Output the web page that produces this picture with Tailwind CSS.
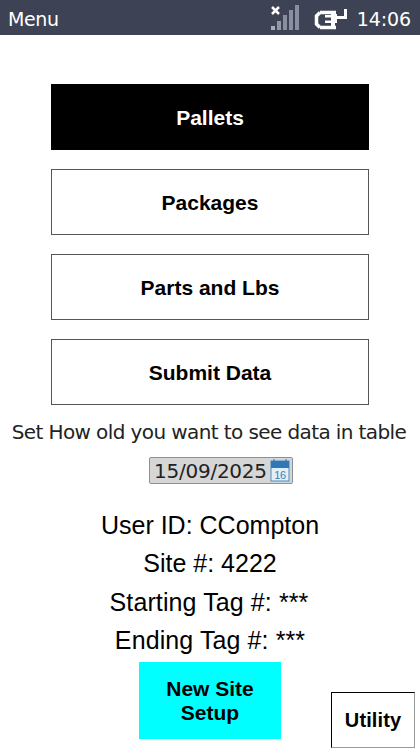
<!DOCTYPE html>
<html lang="en">
<head>
    <meta charset="UTF-8">
    <meta name="viewport" content="width=device-width, initial-scale=1.0">
    <title>Menu</title>
    <script src="https://cdn.jsdelivr.net/npm/@tailwindcss/browser@4"></script>
</head>
<body class="w-[420px] h-[749px] overflow-hidden bg-white font-['Liberation_Sans',sans-serif] text-black">

    <!-- Status bar -->
    <header class="h-[35px] bg-[#3d4354] flex items-center pl-[8px] pr-[9px] text-white text-[19px] font-['DejaVu_Sans',sans-serif]">
        <span class="pt-[3px] tracking-[-0.4px]">Menu</span>
        <svg class="ml-auto" width="29" height="26" viewBox="0 0 29 26">
            <path d="M1 2l7 7M8 2l-7 7" stroke="#fff" stroke-width="2.500" fill="none"/>
            <rect x="0" y="21" width="4" height="4" fill="#a8acb8"/>
            <rect x="6" y="16" width="4" height="9" fill="#9297a6"/>
            <rect x="12" y="10" width="4" height="15" fill="#8a8fa0"/>
            <rect x="18" y="5" width="4" height="20" fill="#8a8fa0"/>
            <rect x="24" y="0" width="4" height="25" fill="#8a8fa0"/>
        </svg>
        <svg class="ml-[14px] mt-[2px]" width="33" height="22" viewBox="0 0 33 22">
            <path d="M6 4.500h16M6 19.500h16M6 4.500L2.500 8v8L6 19.500" fill="none" stroke="#fff" stroke-width="3.500"/>
            <path d="M17 6h6v2h7V1h3v10h-10v4h-2v3h-4v-3h-6v-2.500h6v-3h-6V7h6z" fill="#fff"/>
        </svg>
        <span class="ml-[10px] pt-[3px] tracking-[-0.1px]">14:06</span>
    </header>

    <main class="flex flex-col items-center">
        <!-- Main menu buttons -->
        <div class="mt-[49px] flex flex-col gap-[19px]">
            <button class="w-[318px] h-[66px] pt-[1px] bg-black text-white font-bold text-[21px]">Pallets</button>
            <button class="w-[318px] h-[66px] pt-[1px] bg-white border border-[#555] font-bold text-[21px]">Packages</button>
            <button class="w-[318px] h-[66px] pt-[1px] bg-white border border-[#555] font-bold text-[21px]">Parts and Lbs</button>
            <button class="w-[318px] h-[66px] pt-[1px] bg-white border border-[#555] font-bold text-[21px]">Submit Data</button>
        </div>

        <p class="mt-[14px] text-[20px] leading-[26px] font-['DejaVu_Sans',sans-serif] tracking-[-0.6px] whitespace-nowrap -ml-[2px] text-[#222]">Set How old you want to see data in table</p>

        <!-- Date input -->
        <div class="mt-[12px] ml-[22px] w-[144px] h-[27px] bg-[#d6d6d6] border border-[#8a909c] rounded-[2px] flex items-center justify-between pl-[4px] pr-[2px] text-[20px] text-[#222] font-['DejaVu_Sans',sans-serif] tracking-[-0.25px]">
            <span>15/09/2025</span>
            <svg width="20" height="23" viewBox="0 0 20 23">
                <rect x="1" y="2" width="18" height="20" fill="#e4eef7" stroke="#4a8cc0"/>
                <rect x="1" y="2" width="18" height="7" fill="#2f78b5"/>
                <path d="M4 0v3M16 0v3" stroke="#2f78b5"/>
                <text x="10" y="20" text-anchor="middle" font-size="11" font-family="Liberation Sans" fill="#3b7fb8">16</text>
            </svg>
        </div>

        <!-- Session info -->
        <div class="mt-[22px] text-center text-[25px] leading-[38px]">
            <p>User ID: CCompton</p>
            <p>Site #: 4222</p>
            <p class="translate-y-[1px] -translate-x-[1px] tracking-[0.1px]">Starting Tag #: ***</p>
            <p class="translate-y-[1px] tracking-[0.1px]">Ending Tag #: ***</p>
        </div>

        <!-- Bottom row -->
        <div class="w-full h-[87px] mt-[4px] grid grid-cols-[139px_142px_50px_84px] items-start">
            <button class="col-start-2 h-[77px] bg-[#00ffff] font-bold text-[21px] leading-[24px]">New Site<br>Setup</button>
            <button class="col-start-4 mt-[30px] h-[56px] bg-white border border-t-black border-l-black border-r-[#999] border-b-[#999] font-bold text-[20px] tracking-[0.1px]">Utility</button>
        </div>
    </main>
</body>
</html>
